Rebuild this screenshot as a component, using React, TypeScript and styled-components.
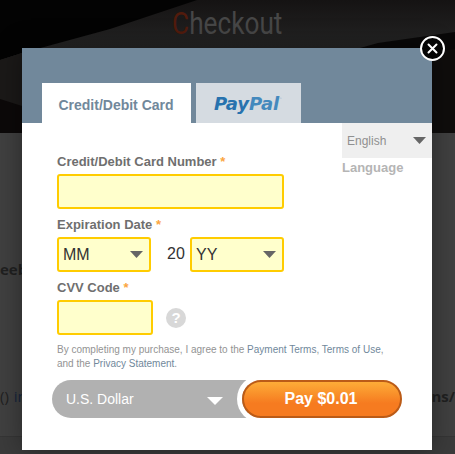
import React from 'react';
import styled, { createGlobalStyle } from 'styled-components';

const GlobalStyle = createGlobalStyle`
  *, *::before, *::after { box-sizing: border-box; }
  body { margin: 0; font-family: 'Liberation Sans', Arial, sans-serif; }
`;

const Page = styled.div`
  position: relative;
  width: 455px;
  height: 454px;
  overflow: hidden;
  background: #404040;
`;

const Hero = styled.header`
  position: relative;
  height: 133px;
  display: flex;
  justify-content: center;
  background: #171515;
`;

const HeroArt = styled.svg`
  position: absolute;
  inset: 0;
`;

const Title = styled.h1`
  position: relative;
  margin: 5px 0 0;
  height: 40px;
  font: 400 31px/38px Roboto, sans-serif;
  color: #474747;
  white-space: nowrap;
  transform: scaleX(0.845);
`;

const TitleInitial = styled.span`
  color: #521b0c;
`;

const CodeLine = styled.div<{ $top: number; $height: number; $bold?: boolean }>`
  display: flex;
  justify-content: space-between;
  margin-top: ${(p) => p.$top}px;
  height: ${(p) => p.$height}px;
  line-height: ${(p) => p.$height}px;
  font-family: 'Open Sans', sans-serif;
  font-size: 15px;
  font-weight: ${(p) => (p.$bold ? 700 : 400)};
  color: #202020;
`;

const Keyword = styled.span`
  margin-left: 1px;
  color: #17253d;
`;

const Footer = styled.div`
  margin-top: 30px;
  height: 20px;
  border-top: 1px solid #353535;
  background: #3b3b3b;
`;

const Modal = styled.section`
  position: absolute;
  left: 22px;
  top: 48px;
  width: 410px;
  height: 402px;
  background: #fff;
  box-shadow: 0 0 25px rgba(0, 0, 0, 0.38);
`;

const CloseButton = styled.button`
  position: absolute;
  right: -13px;
  top: -12px;
  width: 25px;
  height: 25px;
  padding: 0;
  border: 0;
  background: none;
  svg { display: block; }
`;

const Tabs = styled.nav`
  height: 75px;
  padding-left: 20px;
  display: flex;
  align-items: flex-end;
  gap: 5px;
  background: #71889b;
`;

const Tab = styled.div<{ $active?: boolean; $width: number }>`
  width: ${(p) => p.$width}px;
  height: 40px;
  display: flex;
  align-items: center;
  justify-content: center;
  padding: 4px 1px 0 0;
  background: ${(p) => (p.$active ? '#fff' : '#d5dbe1')};
  color: #71889b;
  font-size: 14px;
  font-weight: 700;
`;

const PayPal = styled.span`
  display: flex;
  font: italic 700 18px/22px 'DejaVu Sans', sans-serif;
  letter-spacing: -0.1px;
  color: #2772ae;
  margin-top: -3px;
`;

const PayPalLight = styled.span`
  color: #4489bd;
`;

const Trademark = styled.sup`
  font-size: 3px;
  line-height: 12px;
  font-style: normal;
  font-weight: 400;
  letter-spacing: 0;
  color: #8faec8;
`;

const Upper = styled.div`
  display: flex;
  justify-content: space-between;
`;

const Fields = styled.div`
  padding: 26px 0 0 35px;
`;

const Label = styled.div<{ $gap?: number }>`
  height: 25px;
  padding-top: 5px;
  margin-top: ${(p) => p.$gap ?? 0}px;
  font-size: 13px;
  line-height: 15px;
  font-weight: 700;
  color: #6f6f6f;
  white-space: nowrap;
`;

const Required = styled.span`
  font-weight: 700;
  color: #fba540;
`;

const Box = styled.div<{ $width: number }>`
  width: ${(p) => p.$width}px;
  height: 35px;
  display: flex;
  align-items: center;
  justify-content: space-between;
  padding: 0 6px 0 4px;
  border: 2px solid #fc0;
  border-radius: 3px;
  background: #ffc;
  font-size: 16px;
  color: #333;
`;

const FieldRow = styled.div`
  display: flex;
  align-items: center;
`;

const Century = styled.span`
  width: 39px;
  padding: 0 0 1px 16px;
  font-size: 16px;
  color: #333;
`;

const Help = styled.span`
  width: 20px;
  height: 20px;
  margin-left: 13px;
  border-radius: 50%;
  background: #d8d8d8;
  color: #fff;
  font-size: 15px;
  font-weight: 700;
  line-height: 20px;
  text-align: center;
`;

const LanguageColumn = styled.div`
  width: 90px;
`;

const LanguageSelect = styled.div`
  height: 35px;
  display: flex;
  align-items: center;
  justify-content: space-between;
  padding: 0 6px 0 5px;
  background: #efefef;
  color: #909090;
  font-size: 12px;
`;

const LanguageLabel = styled.div`
  margin-top: 2px;
  font-size: 13px;
  line-height: 15px;
  font-weight: 700;
  color: #b5b5b5;
`;

const Terms = styled.p`
  margin: 8px 0 0 35px;
  font-size: 10px;
  line-height: 14px;
  color: #939393;
  white-space: nowrap;
`;

const TermsLink = styled.a`
  color: #71889b;
`;

const PayBar = styled.div`
  display: flex;
  height: 38px;
  width: 350px;
  margin: 9px 0 0 30px;
`;

const Currency = styled.div`
  width: 209px;
  margin-right: -19px;
  padding: 0 38px 0 14px;
  display: flex;
  align-items: center;
  justify-content: space-between;
  background: #b1b1b1;
  border-radius: 19px 0 0 19px;
  clip-path: inset(0 13px 0 0);
  color: #fff;
  font-size: 14px;
  svg { margin-top: 4px; }
`;

const PayButton = styled.button`
  position: relative;
  width: 160px;
  height: 38px;
  padding: 0 2px 1px 0;
  border: 2px solid #bb5b17;
  border-radius: 19px;
  background: linear-gradient(#fdac38 0%, #f67b20 62%, #f67b20 100%);
  box-shadow: 0 0 0 5px #fff;
  color: #fff;
  font: 700 16px 'Liberation Sans', Arial, sans-serif;
`;

const Caret = ({ color = '#666', width = 13, height = 7 }) => (
  <svg width={width} height={height} viewBox="0 0 13 7" preserveAspectRatio="none">
    <path d="M0 0H13L6.5 7Z" fill={color} />
  </svg>
);

export default function App() {
  return (
    <>
      <GlobalStyle />
      <Page>
        <Hero>
          <HeroArt width="455" height="133">
            <defs>
              <linearGradient id="desk" x1="0" y1="0" x2="0" y2="1">
                <stop offset="0" stopColor="#151313" />
                <stop offset="0.35" stopColor="#242424" />
                <stop offset="1" stopColor="#191616" />
              </linearGradient>
            </defs>
            <rect width="455" height="133" fill="url(#desk)" />
            <path d="M0 0H197L110 29L22 53L0 60Z" fill="#030303" />
            <path d="M0 60L22 53V133H0Z" fill="#1b1918" />
            <path d="M0 99L22 106V133H0Z" fill="#0c0909" />
            <path d="M360 48L378 43L455 32V133H432V48Z" fill="#090808" />
            <path d="M432 52L455 49V133H432Z" fill="#0f0d0c" />
          </HeroArt>
          <Title><TitleInitial>C</TitleInitial>heckout</Title>
        </Hero>
        <CodeLine $top={126} $height={20} $bold><span>eeb</span></CodeLine>
        <CodeLine $top={107} $height={20}>
          <span>() <Keyword>in</Keyword></span>
          <b>ns/</b>
        </CodeLine>
        <Footer />

        <Modal>
          <Tabs>
            <Tab $active $width={149}>Credit/Debit Card</Tab>
            <Tab $width={105}>
              <PayPal>Pay<PayPalLight>Pal</PayPalLight><Trademark>™</Trademark></PayPal>
            </Tab>
          </Tabs>
          <Upper>
            <Fields>
              <Label>Credit/Debit Card Number <Required>*</Required></Label>
              <Box $width={227} />
              <Label $gap={3}>Expiration Date <Required>*</Required></Label>
              <FieldRow>
                <Box $width={94}>MM <Caret /></Box>
                <Century>20</Century>
                <Box $width={94}>YY <Caret /></Box>
              </FieldRow>
              <Label $gap={3}>CVV Code <Required>*</Required></Label>
              <FieldRow>
                <Box $width={96} />
                <Help>?</Help>
              </FieldRow>
            </Fields>
            <LanguageColumn>
              <LanguageSelect>English <Caret /></LanguageSelect>
              <LanguageLabel>Language</LanguageLabel>
            </LanguageColumn>
          </Upper>
          <Terms>
            By completing my purchase, I agree to the <TermsLink>Payment Terms</TermsLink>, <TermsLink>Terms of Use</TermsLink>,
            <br />
            and the <TermsLink>Privacy Statement</TermsLink>.
          </Terms>
          <PayBar>
            <Currency>U.S. Dollar <Caret color="#fff" width={16} height={8} /></Currency>
            <PayButton>Pay $0.01</PayButton>
          </PayBar>
          <CloseButton aria-label="Close">
            <svg width="25" height="25" viewBox="0 0 25 25">
              <circle cx="12.5" cy="12.5" r="11.5" fill="#050505" stroke="#fff" strokeWidth="2" />
              <path d="M8.5 8.5L16.5 16.5M16.5 8.5L8.5 16.5" stroke="#fff" strokeWidth="2" strokeLinecap="round" />
            </svg>
          </CloseButton>
        </Modal>
      </Page>
    </>
  );
}
